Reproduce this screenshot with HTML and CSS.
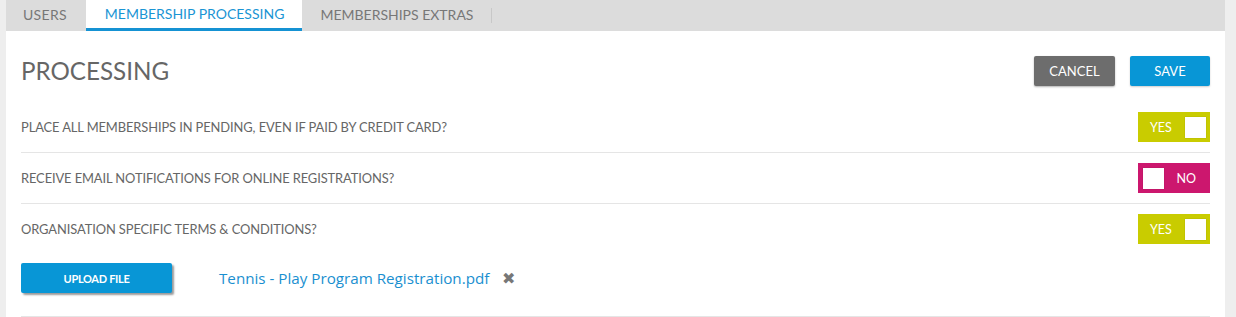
FILE: index.html
```html
<!DOCTYPE html>
<html>
<head lang="en">
    <meta charset="UTF-8">
    <title>Membership processing</title>
    <link rel="stylesheet" href="styles.css">
</head>
<body>
<div class="panel">
    <!-- 选项卡 -->
    <ul class="tabs">
        <li class="first">USERS</li>
        <li class="active">MEMBERSHIP PROCESSING</li>
        <li class="last">MEMBERSHIPS EXTRAS</li>
    </ul>

    <div class="content">
        <div class="header">
            <h1>PROCESSING</h1>
            <div class="actions">
                <button class="btn btn-cancel">CANCEL</button>
                <button class="btn btn-save">SAVE</button>
            </div>
        </div>

        <div class="row">
            <span class="label">PLACE ALL MEMBERSHIPS IN PENDING, EVEN IF PAID BY CREDIT CARD?</span>
            <div class="toggle on"><span>YES</span><i class="knob"></i></div>
        </div>
        <div class="row">
            <span class="label">RECEIVE EMAIL NOTIFICATIONS FOR ONLINE REGISTRATIONS?</span>
            <div class="toggle off"><i class="knob"></i><span>NO</span></div>
        </div>
        <div class="row row-upload">
            <div class="row-top">
                <span class="label">ORGANISATION SPECIFIC TERMS &amp; CONDITIONS?</span>
                <div class="toggle on"><span>YES</span><i class="knob"></i></div>
            </div>
            <div class="upload">
                <button class="btn btn-upload">UPLOAD FILE</button>
                <a class="file" href="#">Tennis - Play Program Registration.pdf</a>
                <span class="remove">&#10006;</span>
            </div>
        </div>
    </div>
</div>
</body>
</html>
```

FILE: styles.css
```css
body{
    margin: 0;
    background: #eeeeee;
    font-family: Lato, "Open Sans", sans-serif;
    color: #666666;
}
.panel{
    margin-left: 6px;
    width: 1219px;
    min-height: 317px;
    background: #ffffff;
}
.tabs{
    list-style: none;
    margin: 0;
    padding: 0;
    height: 31px;
    display: flex;
    background: #dcdcdc;
}
.tabs li{
    padding: 0 18px;
    line-height: 30px;
    font-size: 14px;
    color: #777777;
}
.tabs li.first{
    padding: 0 19px 0 17px;
    letter-spacing: 0.3px;
}
.tabs li.active{
    padding: 0 18px 0 19px;
    background: #ffffff;
    color: #1a95d4;
    border-bottom: 3px solid #1592d3;
    line-height: 28px;
}
.tabs li.last{
    padding-right: 0;
}
.tabs li.last::after{
    content: '';
    display: inline-block;
    width: 1px;
    height: 15px;
    margin-left: 18px;
    vertical-align: -3px;
    background: #c8c8c8;
}
.content{
    padding: 0 15px;
}
.header{
    display: flex;
    justify-content: space-between;
    align-items: center;
    padding: 25px 0 16px;
}
.header h1{
    margin: 0;
    font-size: 24.2px;
    font-weight: normal;
    line-height: 30px;
    color: #666666;
}
.actions{
    display: flex;
    gap: 15px;
}
.btn{
    border: none;
    border-radius: 2px;
    font-family: Lato, sans-serif;
    color: #ffffff;
    height: 30px;
    padding: 0;
    cursor: pointer;
}
.btn-cancel{
    width: 81px;
    background: #6d6d6d;
    font-size: 13px;
    box-shadow: 0 1px 2px rgba(0, 0, 0, 0.3);
}
.btn-save{
    width: 80px;
    background: #0896d6;
    font-size: 13px;
    box-shadow: 0 1px 2px rgba(0, 0, 0, 0.2);
}
.row{
    border-bottom: 1px solid #e5e5e5;
    padding: 10px 0;
    display: flex;
    justify-content: space-between;
    align-items: center;
}
.row-upload{
    display: block;
    padding-bottom: 23px;
}
.row-top{
    display: flex;
    justify-content: space-between;
    align-items: center;
}
.label{
    font-size: 12.9px;
    letter-spacing: -0.1px;
    color: #666666;
    margin-top: -1px;
}
.toggle{
    width: 72px;
    height: 30px;
    box-sizing: border-box;
    display: flex;
    align-items: center;
    justify-content: space-between;
    color: #ffffff;
    font-size: 12.5px;
}
.toggle.on{
    background: #c9cc00;
    padding: 0 4px 0 12px;
}
.toggle.off{
    background: #cc176e;
    padding: 0 14px 0 5px;
}
.knob{
    width: 21px;
    height: 21px;
    background: #ffffff;
    box-shadow: 0 0 1px rgba(0, 0, 0, 0.25);
}
.upload{
    display: flex;
    align-items: center;
    margin-top: 19px;
}
.btn-upload{
    width: 151px;
    background: #0896d6;
    font-size: 11px;
    font-weight: bold;
    letter-spacing: -0.3px;
    box-shadow: 2px 2px 2px rgba(0, 0, 0, 0.4);
}
.file{
    margin-left: 47px;
    font-family: "Open Sans", sans-serif;
    font-size: 15.2px;
    color: #1a8fd0;
    text-decoration: none;
}
.remove{
    margin-left: 13px;
    font-size: 16px;
    color: #777777;
}
```
